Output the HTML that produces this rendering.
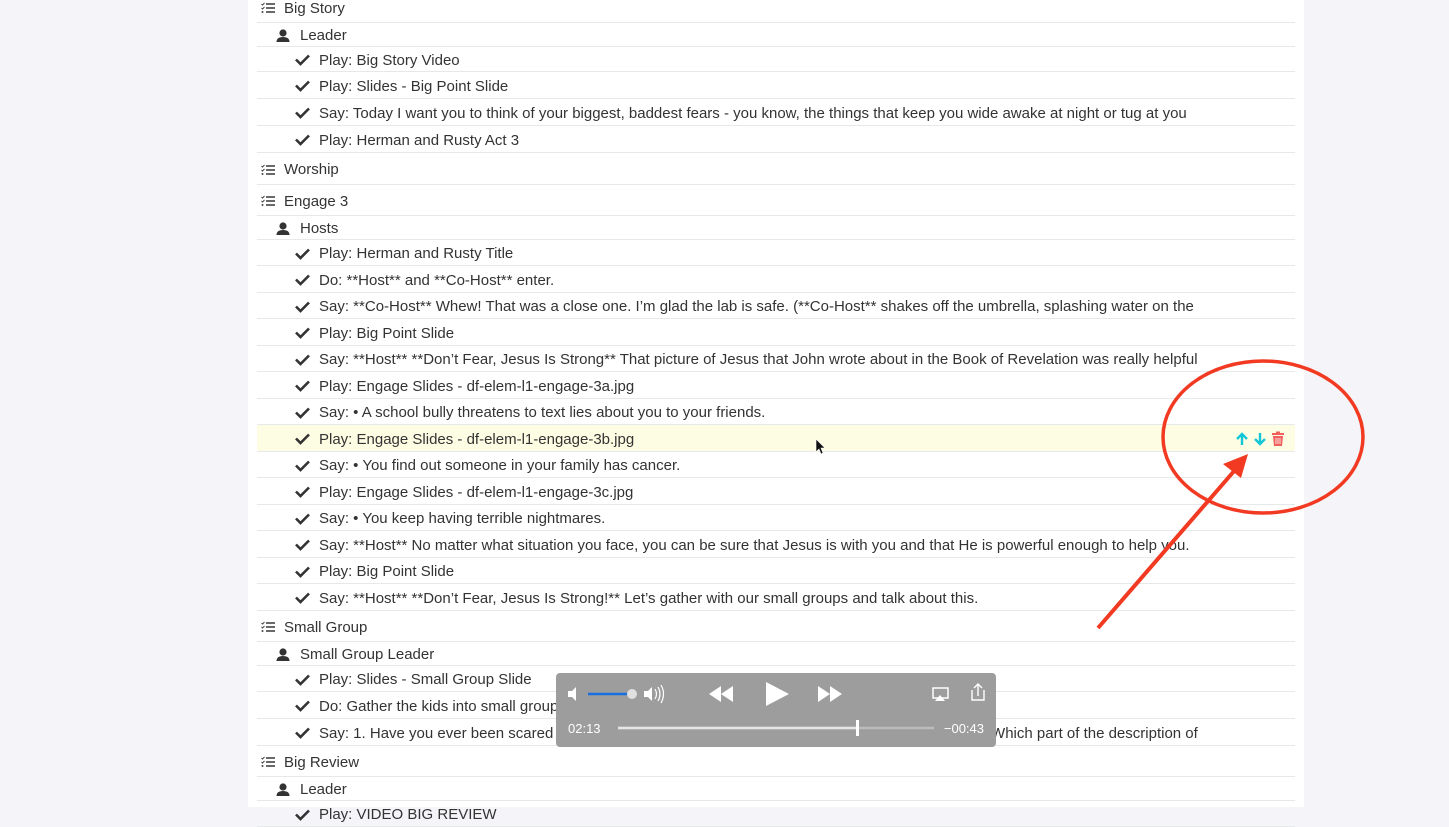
<!DOCTYPE html>
<html><head><meta charset="utf-8"><style>
body{margin:0;width:1449px;height:807px;overflow:hidden;background:#f5f4f8;font-family:"Liberation Sans",sans-serif;position:relative}
.panel{position:absolute;left:248px;top:0;width:1056px;height:807px;background:#fff}
.r{position:absolute;left:257px;width:1038px;border-bottom:1px solid #e6e9e9;display:flex;align-items:center;font-size:15px;color:#333;white-space:nowrap;overflow:hidden;box-sizing:border-box;padding-top:2px}
.r svg{position:absolute}
.s span{margin-left:27px}
.p span{margin-left:43px}
.c span{margin-left:62px}
.hl{background:#fdfde3}
</style></head><body>
<div class="panel"></div>
<svg width="0" height="0" style="position:absolute"><defs>
<g id="li"><path d="M0.5 2l1 1 2-2" stroke="#444" fill="none" stroke-width="1"/><path d="M0.5 6l1 1 2-2" stroke="#444" fill="none" stroke-width="1"/><circle cx="1.5" cy="10" r="1" fill="#444"/><rect x="5" y="1.2" width="9" height="1.6" fill="#444"/><rect x="5" y="5.2" width="9" height="1.6" fill="#444"/><rect x="5" y="9.2" width="9" height="1.6" fill="#444"/></g>
<g id="pe"><circle cx="7" cy="4" r="3.6" fill="#333"/><path d="M0.5 13 Q0.5 8 7 8 Q13.5 8 13.5 13 Z" fill="#333"/></g>
<g id="ck"><path d="M1 6.5 L5.5 11 L14 2.5" stroke="#333" stroke-width="2.6" fill="none"/></g>
</defs></svg>
<div id="rows"></div>
<script>
const R=[["s","Big Story",-8,23],["p","Leader",23,47],["c","Play: Big Story Video",47,72],["c","Play: Slides - Big Point Slide",72,99],["c","Say: Today I want you to think of your biggest, baddest fears - you know, the things that keep you wide awake at night or tug at you",99,126],["c","Play: Herman and Rusty Act 3",126,153],["s","Worship",153,185],["s","Engage 3",185,216],["p","Hosts",216,240],["c","Play: Herman and Rusty Title",240,266],["c","Do: **Host** and **Co-Host** enter.",266,293],["c","Say: **Co-Host** Whew! That was a close one. I’m glad the lab is safe. (**Co-Host** shakes off the umbrella, splashing water on the",293,319],["c","Play: Big Point Slide",319,346],["c","Say: **Host** **Don’t Fear, Jesus Is Strong** That picture of Jesus that John wrote about in the Book of Revelation was really helpful",346,372],["c","Play: Engage Slides - df-elem-l1-engage-3a.jpg",372,399],["c","Say: • A school bully threatens to text lies about you to your friends.",399,425],["c","Play: Engage Slides - df-elem-l1-engage-3b.jpg",425,452,1],["c","Say: • You find out someone in your family has cancer.",452,478],["c","Play: Engage Slides - df-elem-l1-engage-3c.jpg",478,505],["c","Say: • You keep having terrible nightmares.",505,531],["c","Say: **Host** No matter what situation you face, you can be sure that Jesus is with you and that He is powerful enough to help you.",531,558],["c","Play: Big Point Slide",558,584],["c","Say: **Host** **Don’t Fear, Jesus Is Strong!** Let’s gather with our small groups and talk about this.",584,611],["s","Small Group",611,642],["p","Small Group Leader",642,666],["c","Play: Slides - Small Group Slide",666,692],["c","Do: Gather the kids into small groups.",692,719],["c","Say: 1. Have you ever been scared of something? What were you scared of? 2. How did you feel? 3. Which part of the description of",719,746],["s","Big Review",746,777],["p","Leader",777,801],["c","Play: VIDEO BIG REVIEW",801,827]];
let h="";
for(const [t,x,a,b,hl] of R){
 const ic=t=="s"?'<svg style="left:4px" width="15" height="12"><use href="#li"/></svg>':t=="p"?'<svg style="left:19px" width="14" height="13"><use href="#pe"/></svg>':'<svg style="left:38px" width="16" height="14"><use href="#ck"/></svg>';
 let extra=hl?'<svg style="left:978px" width="50" height="16" viewBox="0 0 50 16"><path d="M7 14V3M2 8L7 3L12 8" stroke="#12c8d8" stroke-width="2.4" fill="none"/><path d="M25 2V13M20 8L25 13L30 8" stroke="#12c8d8" stroke-width="2.4" fill="none"/><rect x="37" y="2" width="12" height="2" fill="#f0605d"/><rect x="41" y="0.5" width="4" height="2" fill="#f0605d"/><path d="M38 5H48L47 15H39Z" fill="#f0605d"/><path d="M41 7V13M43 7V13M45 7V13" stroke="#fff" stroke-width="0.8"/></svg>':'';
 h+=`<div class="r ${t}${hl?' hl':''}" style="top:${a}px;height:${b-a}px">${ic}<span>${x}</span>${extra}</div>`;
}
document.getElementById("rows").innerHTML=h;
</script>
<div style="position:absolute;left:556px;top:673px;width:440px;height:74px;background:#9d9d9d;border-radius:4px;color:#fff;font-size:13px">
<svg width="440" height="74" style="position:absolute;left:0;top:0">
<path d="M12 18h4l4-4v14l-4-4h-4z" fill="#fff"/>
<line x1="32" y1="21" x2="76" y2="21" stroke="#1a6fe0" stroke-width="2.5"/>
<circle cx="76" cy="21" r="5" fill="#e0e0e0"/>
<path d="M88 18h4l4-4v14l-4-4h-4z" fill="#fff"/><path d="M99 16q3 5 0 10M102 14q4 7 0 14M105 12q5 9 0 18" stroke="#fff" fill="none" stroke-width="1.2"/>
<path d="M165 21l12-8v16zM153 21l12-8v16z" fill="#fff"/>
<path d="M210 9l23 12-23 12z" fill="#fff"/>
<path d="M262 13l12 8-12 8zM274 13l12 8-12 8z" fill="#fff"/>
<rect x="377" y="15" width="15" height="10" fill="none" stroke="#fff" stroke-width="1.5"/><path d="M379 28l5-6 5 6z" fill="#fff"/>
<path d="M416 17v10h12v-10M422 12v11M418 15l4-4 4 4" stroke="#fff" fill="none" stroke-width="1.4"/>
<line x1="62" y1="55" x2="378" y2="55" stroke="#bcbcbc" stroke-width="2.5"/>
<line x1="62" y1="55" x2="302" y2="55" stroke="#e6e6e6" stroke-width="2.5"/>
<rect x="300" y="47" width="3" height="16" fill="#fff"/>
</svg>
<span style="position:absolute;left:12px;top:48px">02:13</span>
<span style="position:absolute;right:12px;top:48px">−00:43</span>
</div>
<svg width="1449" height="807" style="position:absolute;left:0;top:0;pointer-events:none">
<ellipse cx="1263" cy="437" rx="100" ry="76" fill="none" stroke="#f23a22" stroke-width="3.5"/>
<line x1="1098" y1="628" x2="1235" y2="470" stroke="#f23a22" stroke-width="4"/>
<path d="M1248 454L1223 464L1241 478Z" fill="#f23a22"/>
<path d="M816 439v13l3-3 2 5 2-1-2-5h4z" fill="#111" stroke="#fff" stroke-width="0.6"/>
</svg>
</body></html>
